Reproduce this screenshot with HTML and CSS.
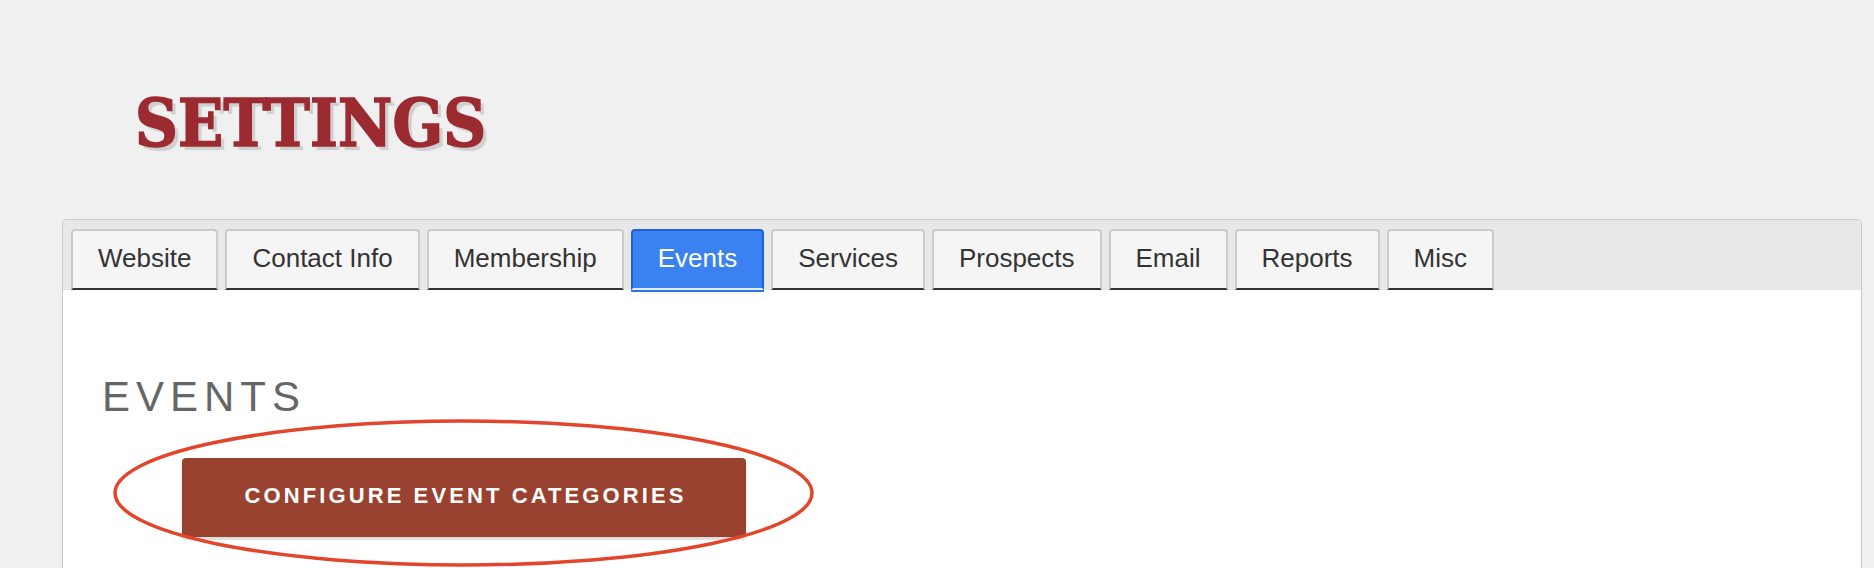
FILE: index.html
```html
<!DOCTYPE html>
<html lang="en">
<head>
<meta charset="utf-8">
<title>Settings</title>
<link rel="stylesheet" href="styles.css">
</head>
<body>
  <header class="page-header">
    <h1 class="page-title">SETTINGS</h1>
  </header>
  <main class="panel">
    <nav class="tabs">
      <a class="tab">Website</a>
      <a class="tab">Contact Info</a>
      <a class="tab">Membership</a>
      <a class="tab tab-active">Events</a>
      <a class="tab">Services</a>
      <a class="tab">Prospects</a>
      <a class="tab">Email</a>
      <a class="tab">Reports</a>
      <a class="tab">Misc</a>
    </nav>
    <section class="panel-body">
      <h2 class="section-title">EVENTS</h2>
      <div class="action-wrap">
        <button class="action-btn" type="button">CONFIGURE EVENT CATEGORIES</button>
        <svg class="highlight" width="710" height="156" viewBox="0 0 710 156" aria-hidden="true">
          <ellipse cx="353.5" cy="77" rx="348.5" ry="72" fill="none" stroke="#e2452c" stroke-width="3.5"/>
        </svg>
      </div>
    </section>
  </main>
</body>
</html>
```

FILE: styles.css
```css
html, body {
  margin: 0;
  padding: 0;
}

body {
  background: #f0f0f0;
  font-family: "Liberation Sans", Arial, sans-serif;
  color: #333;
  overflow: hidden;
}

.page-header {
  padding: 90px 0 0 135px;
  height: 130px;
  box-sizing: border-box;
}

.page-title {
  margin: 0;
  font-family: "DejaVu Serif Condensed", "DejaVu Serif", serif;
  font-stretch: condensed;
  font-weight: bold;
  font-size: 66px;
  line-height: 66px;
  color: #9c2a31;
  -webkit-text-stroke: 1.6px #9c2a31;
  text-shadow: 4px 4px 1px #cfcfcf;
  letter-spacing: 0.2px;
}

.panel {
  margin: 89px 0 0 62px;
  width: 1800px;
  box-sizing: border-box;
  height: 400px;
  background: #fff;
  border: 1px solid #c8c8c8;
  border-radius: 4px;
}

.tabs {
  display: flex;
  align-items: flex-end;
  gap: 7px;
  height: 70px;
  box-sizing: border-box;
  padding: 0 8px;
  background: #e8e8e8;
  border-radius: 3px 3px 0 0;
}

.tab {
  display: block;
  height: 61px;
  box-sizing: border-box;
  padding: 0 25px 3px;
  line-height: 54px;
  font-size: 26px;
  color: #333;
  background: #f5f5f5;
  border: 2px solid #cbcbcb;
  border-bottom: 2px solid #333;
  border-radius: 4px 4px 0 0;
  white-space: nowrap;
}

.tab-active {
  background: #3a82f0;
  color: #fff;
  border-color: #1d62dc;
  border-bottom: 2px solid #e4edfc;
  box-shadow: 0 2px 0 #2f74e6;
}

.panel-body {
  padding: 83px 0 0 39px;
}

.section-title {
  margin: 0;
  font-size: 42px;
  line-height: 48px;
  font-weight: normal;
  letter-spacing: 6px;
  color: #666;
}

.action-wrap {
  position: relative;
  margin: 37px 0 0 80px;
  width: 564px;
}

.action-btn {
  display: block;
  width: 564px;
  height: 79px;
  border: none;
  border-radius: 4px;
  background: #9a4230;
  color: #fff;
  font-family: "Liberation Sans", Arial, sans-serif;
  font-weight: bold;
  font-size: 22px;
  letter-spacing: 3.1px;
  padding: 0 0 4px 3px;
  box-shadow: 0 3px 2px #dcdcdc;
}

.highlight {
  position: absolute;
  left: -72px;
  top: -42px;
  pointer-events: none;
}
```
